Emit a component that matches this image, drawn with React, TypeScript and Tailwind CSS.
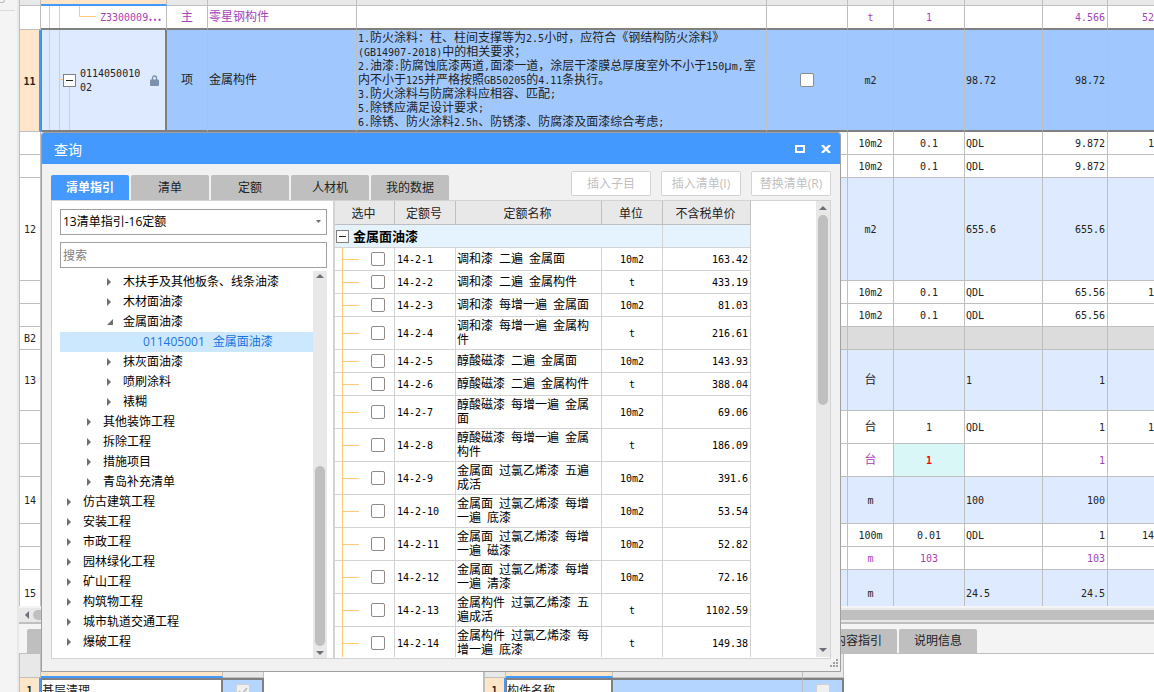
import { Fragment, useState } from "react";

type Row = {
  label?: string;
  height: string;
  tone?: "item" | "section";
  material?: boolean;
  edited?: boolean;
  unit?: string;
  factor?: string;
  expr?: string;
  qty?: string;
  price?: string;
};

const ROWS: Row[] = [
  { height: "h-[23px]", unit: "10m2", factor: "0.1", expr: "QDL", qty: "9.872", price: "1" },
  { height: "h-[23px]", unit: "10m2", factor: "0.1", expr: "QDL", qty: "9.872" },
  { label: "12", height: "h-[103px]", tone: "item", unit: "m2", expr: "655.6", qty: "655.6" },
  { height: "h-[23px]", unit: "10m2", factor: "0.1", expr: "QDL", qty: "65.56", price: "1" },
  { height: "h-[23px]", unit: "10m2", factor: "0.1", expr: "QDL", qty: "65.56" },
  { label: "B2", height: "h-[23px]", tone: "section" },
  { label: "13", height: "h-[61px]", tone: "item", unit: "台", expr: "1", qty: "1" },
  { height: "h-[33px]", unit: "台", factor: "1", expr: "QDL", qty: "1", price: "1" },
  { height: "h-[33px]", material: true, edited: true, unit: "台", factor: "1", qty: "1" },
  { label: "14", height: "h-[47px]", tone: "item", unit: "m", expr: "100", qty: "100" },
  { height: "h-[23px]", unit: "100m", factor: "0.01", expr: "QDL", qty: "1", price: "14" },
  { height: "h-[23px]", material: true, unit: "m", factor: "103", qty: "103" },
  { label: "15", height: "h-[47px]", tone: "item", unit: "m", expr: "24.5", qty: "24.5" },
];

const SPEC_LINES = [
  "1.防火涂料：柱、柱间支撑等为2.5小时，应符合《钢结构防火涂料》",
  "(GB14907-2018)中的相关要求；",
  "2.油漆:防腐蚀底漆两道,面漆一道，涂层干漆膜总厚度室外不小于150μm,室",
  "内不小于125并严格按照GB50205的4.11条执行。",
  "3.防火涂料与防腐涂料应相容、匹配;",
  "5.除锈应满足设计要求;",
  "6.除锈、防火涂料2.5h、防锈漆、防腐漆及面漆综合考虑;",
];

const QUOTAS = [
  { code: "14-2-1", name: "调和漆 二遍 金属面", unit: "10m2", price: "163.42" },
  { code: "14-2-2", name: "调和漆 二遍 金属构件", unit: "t", price: "433.19" },
  { code: "14-2-3", name: "调和漆 每增一遍 金属面", unit: "10m2", price: "81.03" },
  { code: "14-2-4", name: "调和漆 每增一遍 金属构件", unit: "t", price: "216.61", tall: true },
  { code: "14-2-5", name: "醇酸磁漆 二遍 金属面", unit: "10m2", price: "143.93" },
  { code: "14-2-6", name: "醇酸磁漆 二遍 金属构件", unit: "t", price: "388.04" },
  { code: "14-2-7", name: "醇酸磁漆 每增一遍 金属面", unit: "10m2", price: "69.06", tall: true },
  { code: "14-2-8", name: "醇酸磁漆 每增一遍 金属构件", unit: "t", price: "186.09", tall: true },
  { code: "14-2-9", name: "金属面 过氯乙烯漆 五遍成活", unit: "10m2", price: "391.6", tall: true },
  { code: "14-2-10", name: "金属面 过氯乙烯漆 每增一遍 底漆", unit: "10m2", price: "53.54", tall: true },
  { code: "14-2-11", name: "金属面 过氯乙烯漆 每增一遍 磁漆", unit: "10m2", price: "52.82", tall: true },
  { code: "14-2-12", name: "金属面 过氯乙烯漆 每增一遍 清漆", unit: "10m2", price: "72.16", tall: true },
  { code: "14-2-13", name: "金属构件 过氯乙烯漆 五遍成活", unit: "t", price: "1102.59", tall: true },
  { code: "14-2-14", name: "金属构件 过氯乙烯漆 每增一遍 底漆", unit: "t", price: "149.38", tall: true },
];

type Node = { level: 1 | 2 | 3 | 4; name: string; code?: string; open?: boolean };

const TREE: Node[] = [
  { level: 3, name: "木扶手及其他板条、线条油漆" },
  { level: 3, name: "木材面油漆" },
  { level: 3, name: "金属面油漆", open: true },
  { level: 4, name: "金属面油漆", code: "011405001" },
  { level: 3, name: "抹灰面油漆" },
  { level: 3, name: "喷刷涂料" },
  { level: 3, name: "裱糊" },
  { level: 2, name: "其他装饰工程" },
  { level: 2, name: "拆除工程" },
  { level: 2, name: "措施项目" },
  { level: 2, name: "青岛补充清单" },
  { level: 1, name: "仿古建筑工程" },
  { level: 1, name: "安装工程" },
  { level: 1, name: "市政工程" },
  { level: 1, name: "园林绿化工程" },
  { level: 1, name: "矿山工程" },
  { level: 1, name: "构筑物工程" },
  { level: 1, name: "城市轨道交通工程" },
  { level: 1, name: "爆破工程" },
];

const INDENT = { 1: "pl-1", 2: "pl-6", 3: "pl-11", 4: "pl-16" };
const TABS = ["清单指引", "清单", "定额", "人材机", "我的数据"];
const ACTIONS = ["插入子目", "插入清单(I)", "替换清单(R)"];

const cell = "border-r border-b border-[#bfbfbf] p-0";
const quotaCell = "border-r border-b border-[#d3d3d3] p-0";
const selectedCell = "border-r border-b-2 border-r-[#bfbfbf] border-b-[#808080] p-0";
const checkboxClass =
  "block size-3.5 shrink-0 appearance-none rounded-[2px] border border-[#8c8c8c] bg-white";

// Latin runs are set in a half-width mono so they line up with the full-width glyphs.
function Mixed({ text }: { text: string }) {
  return (
    <>
      {text.split(/([\x20-\x7e]+)/).map((part, i) =>
        i % 2 ? (
          <span key={i} className="font-['DejaVu_Sans_Mono',monospace] text-[10px] leading-[10px]">
            {part}
          </span>
        ) : (
          <Fragment key={i}>{part}</Fragment>
        ),
      )}
    </>
  );
}

function Arrow({ dir }: { dir: "up" | "down" | "left" }) {
  const d = {
    up: "M0 5 L4 1 L8 5 Z",
    down: "M0 1 L4 5 L8 1 Z",
    left: "M6 0 L2 4 L6 8 Z",
  }[dir];
  return (
    <svg className="shrink-0" width="8" height={dir === "left" ? 8 : 6} fill="#6e6e78">
      <path d={d} />
    </svg>
  );
}

function CollapseButton() {
  return (
    <button
      type="button"
      aria-label="折叠"
      className="flex size-[13px] shrink-0 items-center justify-center border border-[#808080] bg-white"
    >
      <svg width="7" height="1">
        <rect width="7" height="1" fill="#222" />
      </svg>
    </button>
  );
}

function BillTable() {
  return (
    <table className="w-full table-fixed border-separate border-spacing-0 text-xs leading-[14px] text-[#222]">
      <colgroup>
        <col className="w-[21px]" />
        <col className="w-[126px]" />
        <col className="w-[41px]" />
        <col className="w-[149px]" />
        <col className="w-[410px]" />
        <col className="w-[81px]" />
        <col className="w-[46px]" />
        <col className="w-[71px]" />
        <col className="w-[78px]" />
        <col className="w-[65px]" />
        <col />
      </colgroup>
      <thead>
        <tr className="h-1.5 bg-[#e8e8e8]">
          <th className={cell} />
          <th className="border-r border-b-2 border-r-[#bfbfbf] border-b-[#4499ff] bg-[#ffe6c8] p-0" />
          {Array.from({ length: 9 }, (_, i) => (
            <th key={i} className={`last:border-r-0 ${cell}`} />
          ))}
        </tr>
      </thead>
      <tbody>
        <tr className="h-6 bg-white text-[#a83fb8]">
          <td className={cell} />
          <td className={`relative ${selectedCell}`}>
            <svg className="absolute top-0 left-0" width="60" height="22" stroke="#ffc87d" fill="none">
              <path d="M8.5 0V22M18.5 0V22M38.5 0V10.5H55" />
            </svg>
            <div className="pl-[59px]">
              <Mixed text="Z3300009" />
              <b>⋯</b>
            </div>
          </td>
          <td className={`text-center ${selectedCell}`}>主</td>
          <td className={`pl-px! ${selectedCell}`}>零星钢构件</td>
          <td className={selectedCell} />
          <td className={selectedCell} />
          <td className={`text-center ${selectedCell}`}>
            <Mixed text="t" />
          </td>
          <td className={`text-center ${selectedCell}`}>
            <Mixed text="1" />
          </td>
          <td className={selectedCell} />
          <td className={`pr-0.5! text-right ${selectedCell}`}>
            <Mixed text="4.566" />
          </td>
          <td className={`border-r-0! text-right ${selectedCell}`}>
            <Mixed text="52" />
          </td>
        </tr>
        <tr className="h-[102px] bg-[#a0c8ff]">
          <td className="border-r-2 border-b border-r-[#4499ff] border-b-[#bfbfbf] bg-[#ffe6c8] p-0 text-center font-bold">
            <Mixed text="11" />
          </td>
          <td className="relative border-r-2 border-b-2 border-l border-[#808080] bg-[#deeaff] p-0">
            <svg className="absolute top-0 left-0" width="40" height="100" stroke="#ffc87d" fill="none">
              <path d="M7.5 0V100M17.5 0V100M17.5 49.5H22M27.5 56V100" />
            </svg>
            <div className="relative flex items-center pr-1.5 pl-[21px]">
              <CollapseButton />
              <span className="ml-1 w-[62px] break-all">
                <Mixed text="011405001002" />
              </span>
              <svg className="ml-auto" width="9" height="11" fill="#7a90ac">
                <path d="M2.5 5V3a2 2 0 0 1 4 0v2" fill="none" stroke="#7a90ac" strokeWidth="1.3" />
                <rect y="4.5" width="9" height="6.5" rx="1" />
              </svg>
            </div>
          </td>
          <td className={`text-center ${selectedCell}`}>项</td>
          <td className={`pl-px! ${selectedCell}`}>金属构件</td>
          <td className={`overflow-hidden pl-px! whitespace-nowrap ${selectedCell}`}>
            {SPEC_LINES.map((line) => (
              <div key={line} className="h-3.5">
                <Mixed text={line} />
              </div>
            ))}
          </td>
          <td className={selectedCell}>
            <input type="checkbox" aria-label="锁定综合单价" className={`mx-auto ${checkboxClass}`} />
          </td>
          <td className={`text-center ${selectedCell}`}>
            <Mixed text="m2" />
          </td>
          <td className={selectedCell} />
          <td className={`pl-px! ${selectedCell}`}>
            <Mixed text="98.72" />
          </td>
          <td className={`pr-0.5! text-right ${selectedCell}`}>
            <Mixed text="98.72" />
          </td>
          <td className={`border-r-0! ${selectedCell}`} />
        </tr>
        {ROWS.map((row, i) => (
          <tr
            key={i}
            className={`${row.height} ${
              row.tone === "item" ? "bg-[#deeaff]" : row.tone === "section" ? "bg-[#dcdcdc]" : "bg-white"
            } ${row.material ? "text-[#a83fb8]" : ""}`}
          >
            <td className={`bg-white text-center ${cell}`}>
              <Mixed text={row.label ?? ""} />
            </td>
            <td className={cell} />
            <td className={cell} />
            <td className={cell} />
            <td className={cell} />
            <td className={cell} />
            <td className={`text-center ${cell}`}>
              <Mixed text={row.unit ?? ""} />
            </td>
            <td
              className={`text-center ${cell} ${row.edited ? "bg-[#d9f7f7] font-bold text-[#ff0000]" : ""}`}
            >
              <Mixed text={row.factor ?? ""} />
            </td>
            <td className={`pl-px! ${cell}`}>
              <Mixed text={row.expr ?? ""} />
            </td>
            <td className={`pr-0.5! text-right ${cell}`}>
              <Mixed text={row.qty ?? ""} />
            </td>
            <td className={`border-r-0! text-right ${cell}`}>
              <Mixed text={row.price ?? ""} />
            </td>
          </tr>
        ))}
      </tbody>
    </table>
  );
}

function DetailPane() {
  return (
    <section className="flex h-[38px] shrink-0 overflow-hidden bg-white text-xs leading-[14px] text-[#222]">
      <table className="w-[244px] table-fixed border-separate border-spacing-0">
        <colgroup>
          <col className="w-[21px]" />
          <col className="w-[182px]" />
          <col className="w-[41px]" />
        </colgroup>
        <thead>
          <tr className="h-6 bg-[#e8e8e8]">
            <th className={cell} />
            <th className="border-r border-b-2 border-r-[#bfbfbf] border-b-[#4499ff] bg-[#ffe6c8] p-0" />
            <th className={cell} />
          </tr>
        </thead>
        <tbody>
          <tr className="h-6">
            <td className="border-r-2 border-[#4499ff] bg-[#ffe6c8] p-0 text-center font-bold">
              <Mixed text="1" />
            </td>
            <td className="border-t-2 border-r-2 border-l border-[#808080] p-0">基层清理</td>
            <td className="border-t-2 border-r-2 border-[#808080] bg-[#b4d5ff] p-0">
              <label className="relative mx-auto block size-3.5">
                <input
                  type="checkbox"
                  aria-label="输出"
                  defaultChecked
                  disabled
                  className="block size-3.5 appearance-none rounded-[2px] border border-[#d0d0d0] bg-[#f0f0f0]"
                />
                <svg className="absolute top-0.5 left-0.5" width="10" height="10" fill="none" stroke="#bbb" strokeWidth="1.5">
                  <path d="M1 5l3 3 5-6" />
                </svg>
              </label>
            </td>
          </tr>
        </tbody>
      </table>
      <div className="w-[219px] shrink-0" />
      <table className="w-[361px] table-fixed border-separate border-spacing-0 border-l-2 border-[#bfbfbf]">
        <colgroup>
          <col className="w-[21px]" />
          <col className="w-[107px]" />
          <col className="w-[190px]" />
          <col className="w-[41px]" />
        </colgroup>
        <thead>
          <tr className="h-6 bg-[#e8e8e8]">
            <th className={cell} />
            <th className="border-r border-b-2 border-r-[#bfbfbf] border-b-[#4499ff] bg-[#ffe6c8] p-0" />
            <th className={cell} />
            <th className={cell} />
          </tr>
        </thead>
        <tbody>
          <tr className="h-6">
            <td className="border-r-2 border-[#4499ff] bg-[#ffe6c8] p-0 text-center font-bold">
              <Mixed text="1" />
            </td>
            <td className="border-t-2 border-r-2 border-l border-[#808080] p-0">构件名称</td>
            <td className="border-t-2 border-r border-t-[#808080] border-r-[#bfbfbf] bg-[#b4d5ff] p-0" />
            <td className="border-t-2 border-r-2 border-[#808080] bg-[#b4d5ff] p-0">
              <input
                type="checkbox"
                aria-label="输出"
                disabled
                className="mx-auto block size-3.5 appearance-none rounded-[2px] border border-[#d0d0d0] bg-[#f0f0f0]"
              />
            </td>
          </tr>
        </tbody>
      </table>
    </section>
  );
}

function GuideTree() {
  return (
    <div className="flex min-h-0 flex-1">
      <ul className="min-w-0 flex-1 pt-px text-black">
        {TREE.map((node, i) => (
          <li
            key={i}
            className={`flex h-5 items-center ${INDENT[node.level]} ${
              node.code ? "bg-[#cce8ff] text-[#1a73e0]" : ""
            }`}
          >
            <span className="flex w-[19px] shrink-0 pl-[3px]">
              {!node.code && (
                <svg width="8" height="8" fill="#6e6e6e">
                  <path d={node.open ? "M0 7H6V1Z" : "M0 0L4 4L0 8Z"} />
                </svg>
              )}
            </span>
            {node.code && <span className="mr-2">{node.code}</span>}
            <span>{node.name}</span>
          </li>
        ))}
      </ul>
      <div className="flex w-[14px] flex-col items-center bg-[#e8e8e8] py-0.5">
        <Arrow dir="up" />
        <div className="flex-1" />
        <div className="h-[180px] w-2.5 rounded-full bg-[#bfbfbf]" />
        <div className="mt-1">
          <Arrow dir="down" />
        </div>
      </div>
    </div>
  );
}

function QuotaTable() {
  return (
    <table className="w-[416px] table-fixed border-separate border-spacing-0 text-xs leading-[14px] text-black">
      <colgroup>
        <col className="w-[60px]" />
        <col className="w-[61px]" />
        <col className="w-[146px]" />
        <col className="w-[61px]" />
        <col className="w-[88px]" />
      </colgroup>
      <thead>
        <tr className="h-6 bg-[#e8e8e8] text-[#222]">
          {["选中", "定额号", "定额名称", "单位", "不含税单价"].map((h) => (
            <th key={h} className={`pt-0.5! pr-0.5! font-normal ${cell}`}>
              {h}
            </th>
          ))}
        </tr>
      </thead>
      <tbody>
        <tr className="h-[23px] bg-[#e5f3ff]">
          <td colSpan={4} className={quotaCell}>
            <div className="flex items-center gap-1 pl-px">
              <CollapseButton />
              <b className="text-[13px]">金属面油漆</b>
            </div>
          </td>
          <td className={quotaCell} />
        </tr>
        {QUOTAS.map((q) => (
          <tr key={q.code} className={q.tall ? "h-[33px]" : "h-[23px]"}>
            <td className={`relative ${quotaCell}`}>
              <span className="absolute top-0 -bottom-px left-[7px] border-l border-[#ffc87d]" />
              <div className="flex items-center pl-[7px]">
                <span className="w-[17px] border-t border-[#ffc87d]" />
                <input type="checkbox" aria-label={q.code} className={`ml-3 ${checkboxClass}`} />
              </div>
            </td>
            <td className={`pl-0.5! ${quotaCell}`}>
              <Mixed text={q.code} />
            </td>
            <td className={`px-px! ${quotaCell}`}>
              <Mixed text={q.name} />
            </td>
            <td className={`text-center ${quotaCell}`}>
              <Mixed text={q.unit} />
            </td>
            <td className={`pr-0.5! text-right ${quotaCell}`}>
              <Mixed text={q.price} />
            </td>
          </tr>
        ))}
      </tbody>
    </table>
  );
}

function QueryDialog() {
  const [tab, setTab] = useState(TABS[0]);

  return (
    <div
      role="dialog"
      aria-label="查询"
      className="absolute top-[132px] left-[41px] flex h-[540px] w-[800px] flex-col rounded-t-[3px] border border-[#a0a0a0] bg-[#f1f1f1] text-xs"
    >
      <header className="flex h-[31px] shrink-0 items-center rounded-t-[2px] bg-[#4499ff] pr-[9px] pl-3 text-white">
        <h1 className="flex-1 pt-0.5 text-sm">查询</h1>
        <button type="button" aria-label="最大化" className="mr-4">
          <svg width="10" height="8" fill="none" stroke="#fff" strokeWidth="2">
            <rect x="1" y="1" width="8" height="6" />
          </svg>
        </button>
        <button type="button" aria-label="关闭">
          <svg width="10" height="8" stroke="#fff" strokeWidth="2.4">
            <path d="M1 0L9 8M9 0L1 8" />
          </svg>
        </button>
      </header>

      <div className="flex h-9 shrink-0 items-end px-[9px]">
        <div role="tablist" className="flex flex-1 gap-0.5">
          {TABS.map((t) => (
            <button
              key={t}
              type="button"
              role="tab"
              aria-selected={t === tab}
              onClick={() => setTab(t)}
              className={`h-[25px] w-[78px] rounded-t-[2px] ${
                t === tab ? "bg-[#4499ff] font-bold text-white" : "bg-[#bfbfbf] text-[#222]"
              }`}
            >
              {t}
            </button>
          ))}
        </div>
        <div className="mb-1 flex gap-2.5">
          {ACTIONS.map((a) => (
            <button
              key={a}
              type="button"
              disabled
              className="h-[25px] w-20 rounded-[2px] border border-[#d3d3d3] bg-white text-[#bfbfbf]"
            >
              {a}
            </button>
          ))}
        </div>
      </div>

      <div className="mx-[9px] flex min-h-0 flex-1 border border-[#d3d3d3] bg-white">
        <div className="flex w-[281px] shrink-0 flex-col overflow-hidden pt-2 pr-1.5 pl-2">
          <div className="relative shrink-0">
            <select
              aria-label="清单库"
              className="block h-[26px] w-full appearance-none border border-[#a0a0a0] bg-white px-0.5 text-black"
            >
              <option>13清单指引-16定额</option>
            </select>
            <svg className="pointer-events-none absolute top-[11px] right-1.5" width="5" height="3" fill="#6e6e6e">
              <path d="M0 0H5L2.5 3Z" />
            </svg>
          </div>
          <input
            type="search"
            aria-label="搜索"
            placeholder="搜索"
            className="mt-[7px] mb-[3px] block h-[26px] w-full shrink-0 border border-[#a0a0a0] px-0.5 placeholder:text-[#808080]"
          />
          <GuideTree />
        </div>
        <div className="flex min-w-0 flex-1 border-l-2 border-[#d3d3d3]">
          <div className="mb-px min-w-0 flex-1 overflow-hidden">
            <QuotaTable />
          </div>
          <div className="mb-px flex w-[14px] flex-col items-center bg-[#e8e8e8] py-1">
            <Arrow dir="up" />
            <div className="mt-1 h-[190px] w-2.5 rounded-full bg-[#bfbfbf]" />
            <div className="flex-1" />
            <Arrow dir="down" />
          </div>
        </div>
      </div>

      <footer className="flex h-3 shrink-0 items-start justify-end pr-0.5">
        <svg width="8" height="8" fill="#a0a0a0">
          <path d="M6 0h2v2H6zM3 3h2v2H3zM6 3h2v2H6zM0 6h2v2H0zM3 6h2v2H3zM6 6h2v2H6z" />
        </svg>
      </footer>
    </div>
  );
}

export default function App() {
  return (
    <div className="relative flex h-screen overflow-hidden bg-[#f4f4f4] font-['Open_Sans','Noto_Sans_CJK_SC',sans-serif]">
      <aside className="w-[19px] shrink-0 border-r-2 border-[#e8e8e8]">
        <div className="h-[3px] w-[5px] rounded-br-[3px] border-r border-b border-[#bfbfbf]" />
        <div className="mt-[7px] w-[15px] border-t border-[#dcdcdc]" />
      </aside>

      <main className="flex min-w-0 flex-1 flex-col">
        <div className="min-h-0 flex-1 overflow-hidden border-l border-[#bfbfbf] bg-white">
          <BillTable />
        </div>
        <div className="mt-0.5 flex h-3.5 shrink-0 items-center bg-[#e8e8e8] pl-1">
          <Arrow dir="left" />
          <div className="ml-0.5 h-2.5 flex-1 rounded-l-full bg-[#bfbfbf]" />
        </div>
        <div className="flex h-8 shrink-0 items-end gap-0.5 border-t-2 border-b border-[#bfbfbf] pl-2 text-xs text-[#222]">
          <div className="h-6 w-[790px] rounded-t-[2px] bg-[#bfbfbf]" />
          <button type="button" className="h-6 w-[78px] rounded-t-[2px] bg-[#bfbfbf]">
            内容指引
          </button>
          <button type="button" className="h-6 w-[78px] rounded-t-[2px] bg-[#bfbfbf]">
            说明信息
          </button>
        </div>
        <div className="border-l border-[#bfbfbf] bg-white">
          <DetailPane />
        </div>
      </main>

      <QueryDialog />
    </div>
  );
}
